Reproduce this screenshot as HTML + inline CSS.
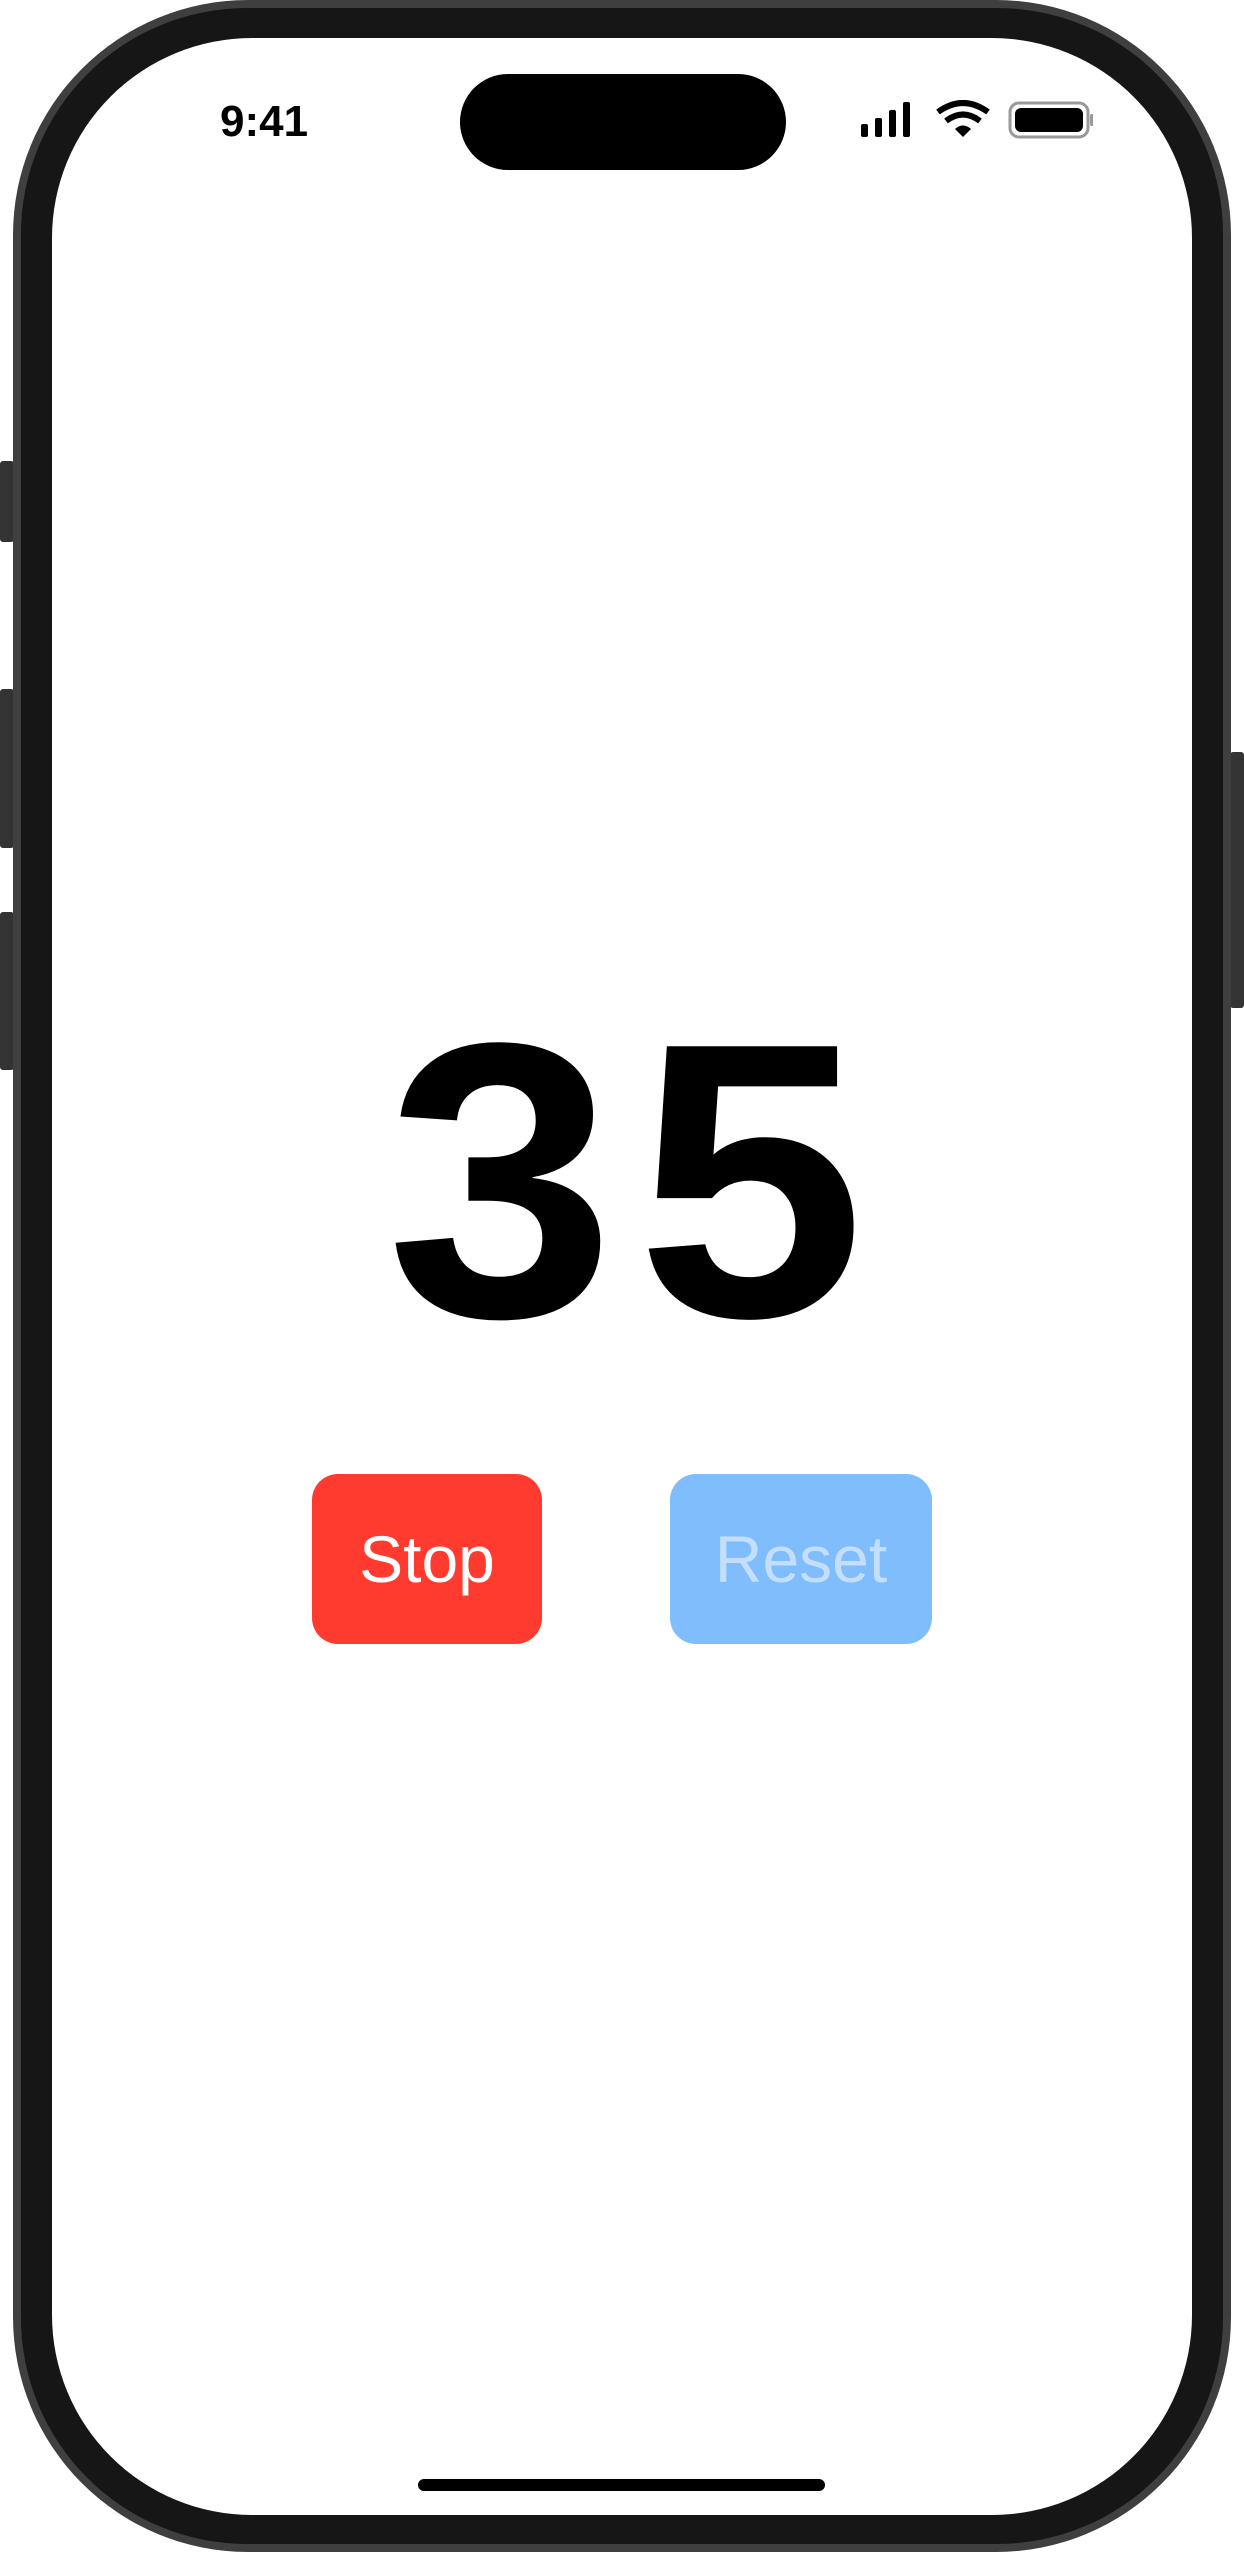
<!DOCTYPE html>
<html><head><meta charset="utf-8"><style>
html,body{margin:0;padding:0;background:#fff;}
body{width:1244px;height:2554px;position:relative;overflow:hidden;font-family:"Liberation Sans",sans-serif;}
.abs{position:absolute;}
.outer{left:13px;top:0;width:1218px;height:2552px;border-radius:235px;background:#3f3f3f;}
.band{left:21px;top:8px;width:1202px;height:2536px;border-radius:226px;background:#161616;}
.screen{left:52px;top:38px;width:1140px;height:2477px;border-radius:200px;background:#fff;}
.btn{background:#333;border-radius:3px;}
.island{left:460px;top:74px;width:326px;height:96px;border-radius:48px;background:#000;}
.time{left:220px;top:97px;font-size:44px;font-weight:bold;letter-spacing:0;color:#000;}
.num{left:14px;width:1244px;top:985px;text-align:center;font-size:392px;font-weight:bold;letter-spacing:20px;line-height:1;color:#000;transform:scaleX(1.05);transform-origin:620px 0;}
.b{border-radius:26px;display:flex;align-items:center;justify-content:center;font-size:66px;}
</style></head><body>
<div class="abs btn" style="left:0;top:461px;width:14px;height:81px"></div>
<div class="abs btn" style="left:0;top:689px;width:14px;height:159px"></div>
<div class="abs btn" style="left:0;top:912px;width:14px;height:158px"></div>
<div class="abs btn" style="left:1230px;top:752px;width:14px;height:256px"></div>
<div class="abs outer"></div>
<div class="abs band"></div>
<div class="abs screen"></div>
<div class="abs island"></div>
<div class="abs time">9:41</div>
<svg class="abs" style="left:858px;top:100px" width="235" height="40" viewBox="0 0 235 40">
 <rect x="3" y="24" width="7" height="13" rx="2" fill="#000"/>
 <rect x="17" y="18" width="7" height="19" rx="2" fill="#000"/>
 <rect x="31" y="10" width="7" height="27" rx="2" fill="#000"/>
 <rect x="45" y="2" width="7" height="35" rx="2" fill="#000"/>
 <path d="M80 12 Q105 -6 130 12" stroke="#000" stroke-width="6" fill="none"/>
 <path d="M88 21 Q105 8 122 21" stroke="#000" stroke-width="6" fill="none"/>
 <path d="M97 29 Q105 22 113 29 L105 37 Z" fill="#000"/>
 <rect x="152" y="3" width="78" height="34" rx="9" fill="none" stroke="#999" stroke-width="3"/>
 <rect x="157" y="8" width="68" height="24" rx="6" fill="#000"/>
 <rect x="232" y="14" width="4" height="12" rx="2" fill="#999"/>
</svg>
<div class="abs num">35</div>
<div class="abs b" style="left:312px;top:1474px;width:230px;height:170px;background:#FF3B30;color:#fff;">Stop</div>
<div class="abs b" style="left:670px;top:1474px;width:262px;height:170px;background:#80BDFD;color:#C4DFFE;">Reset</div>
<div class="abs" style="left:418px;top:2479px;width:407px;height:12px;border-radius:6px;background:#000;"></div>
</body></html>
